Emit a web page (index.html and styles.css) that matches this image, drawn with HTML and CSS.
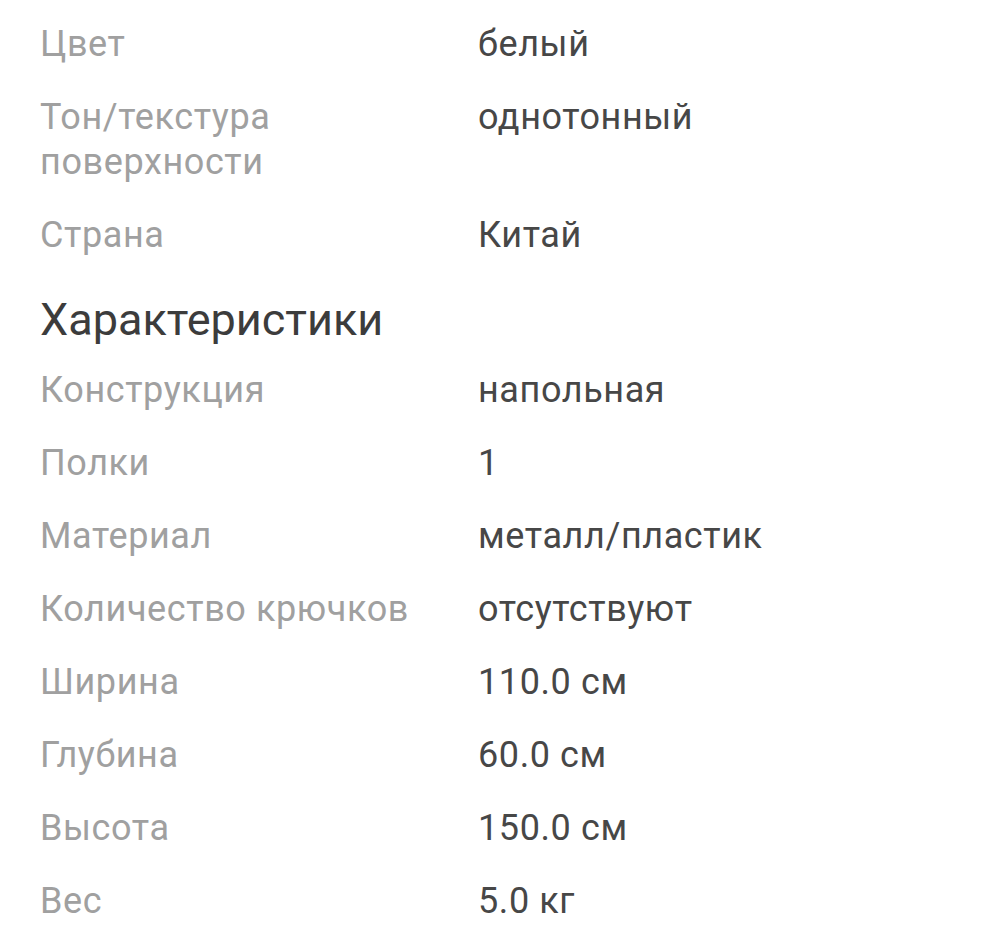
FILE: index.html
```html
<!DOCTYPE html>
<html lang="ru">
<head>
<meta charset="utf-8">
<link rel="stylesheet" href="styles.css">
</head>
<body>
<div class="page">
  <dl class="specs">
    <dt>Цвет</dt><dd>белый</dd>
    <dt>Тон/текстура поверхности</dt><dd>однотонный</dd>
    <dt>Страна</dt><dd>Китай</dd>
  </dl>
  <h2 class="heading">Характеристики</h2>
  <dl class="specs">
    <dt>Конструкция</dt><dd>напольная</dd>
    <dt>Полки</dt><dd>1</dd>
    <dt>Материал</dt><dd>металл/пластик</dd>
    <dt>Количество крючков</dt><dd>отсутствуют</dd>
    <dt>Ширина</dt><dd>110.0 см</dd>
    <dt>Глубина</dt><dd>60.0 см</dd>
    <dt>Высота</dt><dd>150.0 см</dd>
    <dt>Вес</dt><dd>5.0 кг</dd>
  </dl>
</div>
</body>
</html>
```
FILE: styles.css
```css
html, body {
  margin: 0;
  padding: 0;
  background: #ffffff;
}
body {
  font-family: Roboto, "Noto Sans", sans-serif;
}
.page {
  padding: 22px 20px 0 40px;
}
.specs {
  display: grid;
  grid-template-columns: 438px 1fr;
  row-gap: 28px;
  margin: 0;
  font-size: 36px;
  line-height: 45px;
  letter-spacing: 0.6px;
}
.specs dt {
  color: #a0a0a0;
  padding-right: 12px;
}
.specs dd {
  margin: 0;
  color: #474747;
}
.heading {
  margin: 34px 0 20px;
  font-size: 45px;
  font-weight: 400;
  line-height: 56px;
  color: #3c3c3c;
}
```
